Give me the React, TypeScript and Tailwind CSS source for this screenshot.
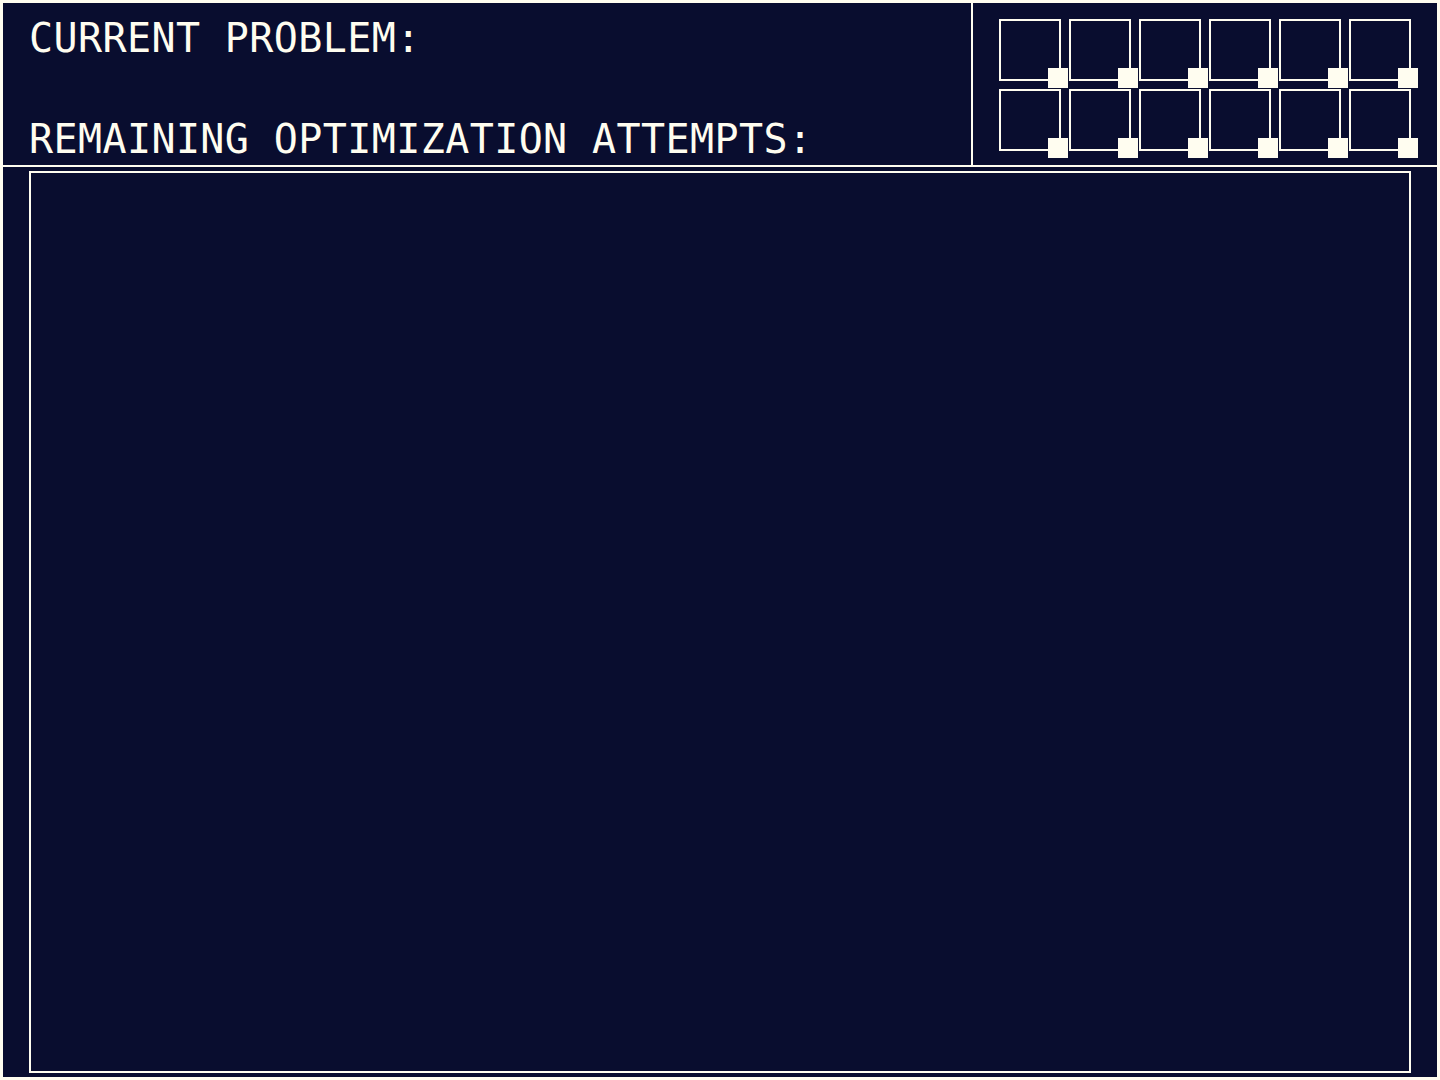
import React from "react";

const cells = Array.from({ length: 12 }, (_, i) => i);

function Slot() {
  return (
    <div className="relative w-[62px] h-[62px] border-2 border-[#fffdf0]">
      <div className="absolute -right-[9px] -bottom-[9px] w-[20px] h-[20px] bg-[#fffdf0]" />
    </div>
  );
}

export default function App() {
  return (
    <div
      className="w-[1440px] h-[1080px] border-[3px] border-[#fffdf0] bg-[#090d2f] flex flex-col text-[#fffdf0]"
      style={{ fontFamily: '"DejaVu Sans Mono", "Liberation Mono", monospace' }}
    >
      <header className="flex h-[164px] shrink-0 border-b-2 border-[#fffdf0]">
        <div className="w-[970px] shrink-0 border-r-2 border-[#fffdf0] pl-[26px] pt-[15px] flex flex-col gap-[61px]">
          <p className="text-[40px] leading-[40px] tracking-[0.4px]">CURRENT PROBLEM:</p>
          <p className="text-[40px] leading-[40px] tracking-[0.4px]">
            REMAINING OPTIMIZATION ATTEMPTS:
          </p>
        </div>
        <div className="flex-1 pl-[26px] pt-[16px]">
          <div className="grid grid-cols-[repeat(6,62px)] gap-[8px]">
            {cells.map((i) => (
              <Slot key={i} />
            ))}
          </div>
        </div>
      </header>
      <main className="flex-1 px-[26px] pt-[4px] pb-[4px] flex">
        <div className="flex-1 border-2 border-[#fffdf0]" />
      </main>
    </div>
  );
}
